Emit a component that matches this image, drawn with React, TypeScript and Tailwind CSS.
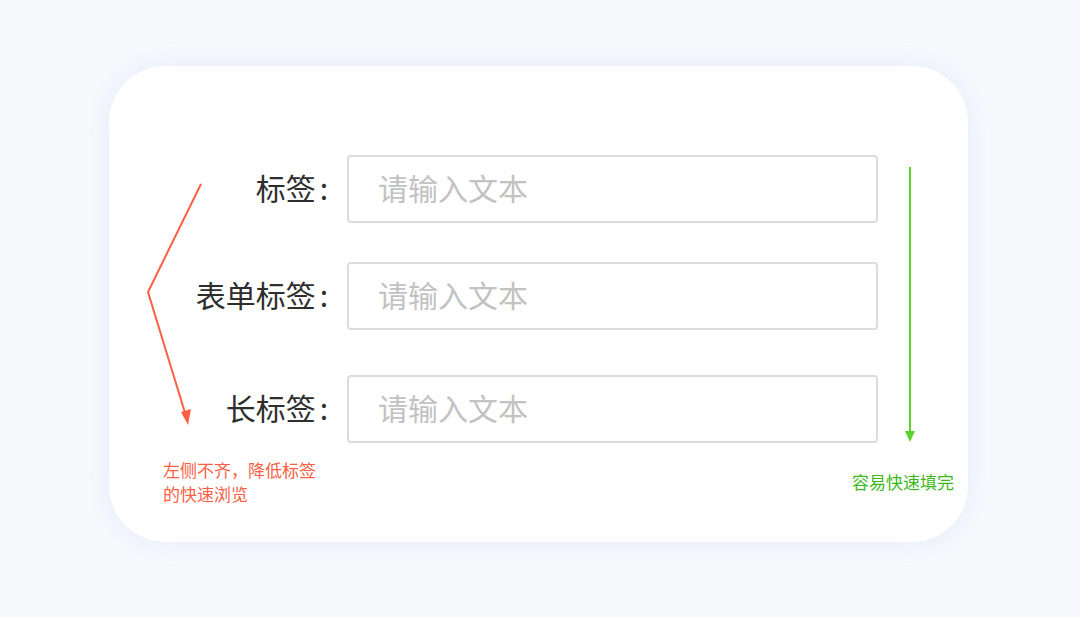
import React from "react";

const rows = [
  { label: "标签", gap: "mt-0" },
  { label: "表单标签", gap: "mt-[39px]" },
  { label: "长标签", gap: "mt-[45px]" },
];

export default function App() {
  return (
    <div
      className="w-[1080px] h-[617px] overflow-hidden bg-[#f7f9fd] pt-[66px] pl-[109px]"
      style={{ fontFamily: '"Noto Sans CJK SC", "Noto Sans", sans-serif' }}
    >
      <div className="relative w-[859px] h-[476px] rounded-[56px] bg-white shadow-[0_0_24px_rgba(205,215,250,0.45)] pt-[89px]">
        {/* form rows */}
        <div className="flex flex-col">
          {rows.map((row) => (
            <div key={row.label} className={`flex items-center ${row.gap}`}>
              <label className="w-[219px] pb-[5px] text-right text-[30px] leading-none text-[#2e2e2e]">
                {row.label}
                <span className="ml-[4px]">:</span>
              </label>
              <input
                placeholder="请输入文本"
                className="ml-[19px] w-[531px] h-[68px] rounded-[4px] border-2 border-[#dcdcdc] bg-white pl-[29px] pb-[5px] text-[30px] text-[#333] placeholder:text-[#c2c2c2] outline-none"
              />
            </div>
          ))}
        </div>

        {/* annotations */}
        <svg
          className="absolute left-0 top-0 pointer-events-none"
          width="859"
          height="476"
          viewBox="0 0 859 476"
        >
          <polyline
            points="92,118 39,226 77,350"
            fill="none"
            stroke="#fb5f46"
            strokeWidth="2"
          />
          <polygon points="79,359 72,346 82,343" fill="#fb5f46" />
          <line x1="801" y1="101" x2="801" y2="366" stroke="#5ad22e" strokeWidth="2" />
          <polygon points="801,376 796,365 806,365" fill="#5ad22e" />
        </svg>

        <p className="absolute left-[54px] top-[392px] text-[17px] leading-[24px] text-[#fb5f46]">
          左侧不齐，降低标签
          <br />
          的快速浏览
        </p>
        <p className="absolute left-[743px] top-[404px] text-[17px] leading-[24px] text-[#3cb81a]">
          容易快速填完
        </p>
      </div>
    </div>
  );
}
